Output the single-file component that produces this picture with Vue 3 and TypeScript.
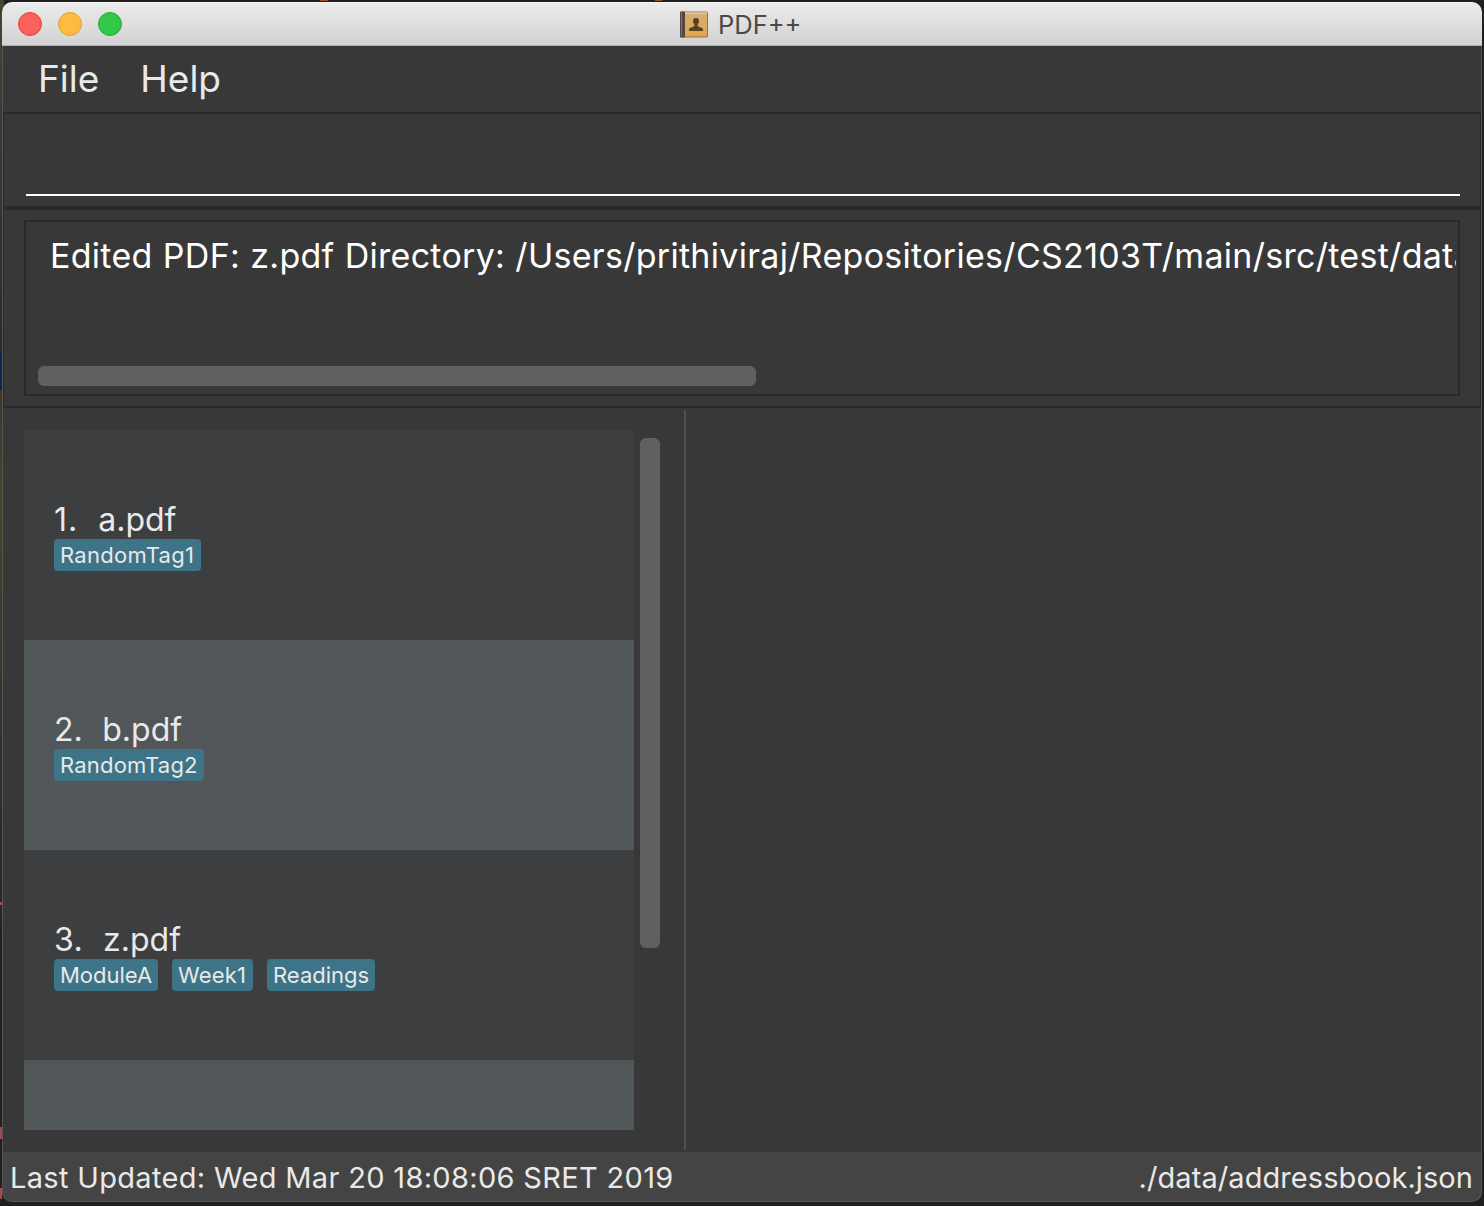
<script setup lang="ts">
interface PdfEntry {
  index: number
  name: string
  tags: string[]
}

const entries: PdfEntry[] = [
  { index: 1, name: 'a.pdf', tags: ['RandomTag1'] },
  { index: 2, name: 'b.pdf', tags: ['RandomTag2'] },
  { index: 3, name: 'z.pdf', tags: ['ModuleA', 'Week1', 'Readings'] },
]
const menus: string[] = ['File', 'Help']
const feedback = 'Edited PDF: z.pdf Directory: /Users/prithiviraj/Repositories/CS2103T/main/src/test/data'
</script>

<template>
  <div class="desktop">
    <i class="spill orange" /><i class="spill orange two" /><i class="spill blue" />
    <i class="spill red" /><i class="spill red two" /><i class="spill red three" />
    <main class="window">
      <header class="titlebar">
        <div class="lights"><i class="close" /><i class="minimise" /><i class="zoom" /></div>
        <svg class="book" width="28" height="27" viewBox="0 0 28 27">
          <defs>
            <linearGradient id="cover" x1="0" y1="0" x2="0" y2="1">
              <stop offset="0" stop-color="#d3ae78" /><stop offset="1" stop-color="#e2a650" />
            </linearGradient>
          </defs>
          <rect x="0" y="0.5" width="28" height="26" rx="1.5" fill="#9b7340" />
          <rect x="1" y="1.5" width="26" height="24" fill="url(#cover)" />
          <rect x="5" y="1.5" width="22" height="1.2" fill="#e9d7b5" />
          <rect x="0" y="0.5" width="5" height="26" rx="1" fill="#554541" />
          <rect x="1" y="1" width="1.2" height="24.500" fill="#806e68" />
          <path d="M16 7c1.900 0 3 1.200 3 3 0 1.600-.5 2.700-1.400 3.500v1.500c.4 1 4.700 1.100 5.400 3.100v1.900H9v-1.900c.7-2 5-2.100 5.400-3.100v-1.500C13.500 12.700 13 11.600 13 10c0-1.800 1.100-3 3-3z" fill="#5c4220" />
        </svg>
        <span class="title">PDF++</span>
      </header>
      <nav class="menubar"><span v-for="menu in menus" :key="menu">{{ menu }}</span></nav>
      <section class="command"><div class="field" /></section>
      <section class="result">
        <div class="result-box">
          <div class="feedback">{{ feedback }}</div>
          <div class="hbar" />
        </div>
      </section>
      <section class="split">
        <div class="list">
          <article v-for="entry in entries" :key="entry.index" class="card">
            <div class="name"><span :class="'n' + entry.index">{{ entry.index }}.</span><span>{{ entry.name }}</span></div>
            <div class="tags"><span v-for="tag in entry.tags" :key="tag" :class="tag.toLowerCase()">{{ tag }}</span></div>
          </article>
          <article class="card" />
        </div>
        <div class="vbar" />
        <div class="divider" />
      </section>
      <footer class="status"><span class="updated">Last Updated: Wed Mar 20 18:08:06 SRET 2019</span><span class="path">./data/addressbook.json</span></footer>
    </main>
  </div>
</template>

<style>
body { background: #211f1f; overflow: hidden; }
</style>
<style scoped>
* { box-sizing: border-box; }
.desktop {
  position: relative;
  width: 1484px;
  height: 1206px;
  padding: 2px 2px 4px;
  background: linear-gradient(#474234, #2c2a24 352px, #3c382c 390px, #48412f 500px, #292723 900px, #211f20 960px) left / 4px 100% no-repeat, #211f20;
  font-family: Inter, "Liberation Sans", sans-serif;
  white-space: nowrap;
}
.spill { position: absolute; background: #a84a20; }
.orange { left: 320px; top: 0; width: 8px; height: 1px; }
.orange.two { left: 655px; width: 7px; }
.blue { left: 0; top: 352px; width: 2px; height: 38px; background: #082a4a; }
.red { left: 0; top: 902px; width: 2px; height: 3px; background: #a94848; }
.red.two { top: 1127px; height: 12px; }
.red.three { top: 1188px; height: 11px; }
.window {
  position: relative;
  display: flex;
  flex-direction: column;
  height: 1200px;
  overflow: hidden;
  border-radius: 10px;
  background: #383838;
}
.window::after {
  content: "";
  position: absolute;
  inset: 44px 0 0;
  border: 1px solid #555;
  border-top: 0;
  border-radius: 0 0 10px 10px;
}
.titlebar {
  display: flex;
  align-items: center;
  flex: 0 0 44px;
  border-top: 1px solid #f6f6f6;
  border-bottom: 1px solid #b1b1b1;
  background: linear-gradient(#ebebeb, #d2d2d2);
}
.lights { display: flex; gap: 16px; padding-left: 16px; width: 678px; }
.lights i { width: 24px; height: 24px; border-radius: 50%; border: 1px solid #e2443f; background: #fc605b; }
.lights .minimise { background: #fdbc40; border-color: #dfa034; }
.lights .zoom { background: #34c84a; border-color: #27aa35; }
.title { margin: 0 0 0 10px; font-size: 25.5px; color: #4a4a4a; }
.menubar { flex: 0 0 66px; display: flex; gap: 41px; padding: 0 0 0 36px; line-height: 66px; font-size: 37px; font-weight: 400; color: #e9e9e9; }
.command { flex: 0 0 96px; margin: 0 1px; border: 2px solid #2a2a2a; border-width: 2px 1px; padding: 0 20px 0 22px; }
.field { height: 82px; border-bottom: 2px solid #fff; }
.result { flex: 0 0 200px; margin: 0 1px; border: 2px solid #2a2a2a; border-width: 2px 1px; padding: 10px 20px; }
.result-box { height: 176px; border: 2px solid #2a2a2a; padding: 12px 2px 0 12px; }
.feedback { overflow: hidden; height: 46px; padding-left: 12px; line-height: 44px; font-size: 34px; letter-spacing: .29px; word-spacing: .3px; color: #fff; }
.hbar { width: 718px; height: 20px; margin-top: 86px; border-radius: 6px; background: #606060; }
.split { flex: 0 0 744px; display: flex; padding-left: 22px; }
.list { width: 610px; height: 700px; margin-top: 22px; overflow: hidden; }
.card { height: 210px; padding: 70px 30px 0; background: #3c3e3f; color: #e9e9e9; }
.card:nth-child(even) { background: #515658; }
.name { display: flex; height: 39px; line-height: 40px; font-size: 32px; }
.n1 { letter-spacing: 1px; margin-right: 20px; }
.n2 { margin-right: 19.5px; }
.n3 { letter-spacing: .4px; margin-right: 20px; }
.tags { display: flex; gap: 14px; }
.tags span { height: 32px; padding: 0 6px; border-radius: 4px; line-height: 32px; font-size: 22px; background: #3e7488; }
.tags .randomtag1 { width: 147px; letter-spacing: .3px; }
.tags .randomtag2 { width: 150px; letter-spacing: .2px; }
.tags .modulea { width: 104px; }
.tags .week1 { width: 81px; letter-spacing: .2px; }
.tags .readings { width: 108px; }
.vbar { width: 20px; height: 510px; margin: 30px 24px 0 6px; border-radius: 6px; background: #606060; }
.divider { width: 2px; height: 740px; margin-top: 2px; background: #505050; }
.status { flex: 1; display: flex; justify-content: space-between; padding: 0 9px 0 8px; background: #444; line-height: 51px; font-size: 29px; color: #e9e9e9; }
.updated { letter-spacing: .33px; }
.path { letter-spacing: .08px; }
</style>
